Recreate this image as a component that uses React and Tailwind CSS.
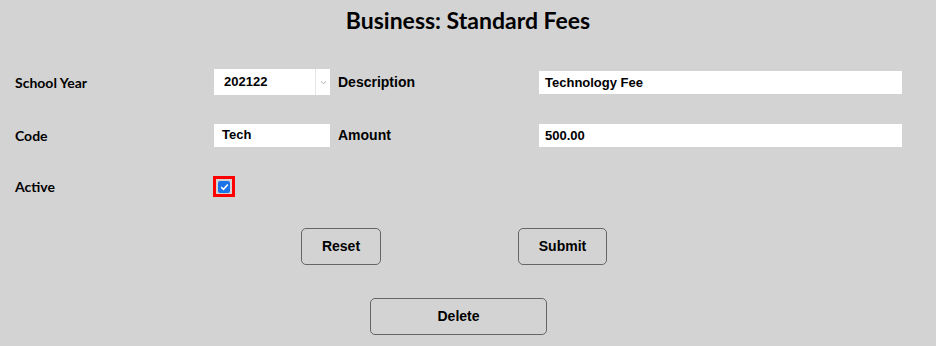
import React from "react";

const geo = { fontFamily: "Lato, 'Open Sans', sans-serif" };

const App = () => {
  return (
    <div className="w-[936px] h-[346px] bg-[#d3d3d3] text-black overflow-hidden" style={{ fontFamily: "'Liberation Sans', Arial, sans-serif" }}>
      {/* Title */}
      <h1 className="pt-[7px] text-center text-[23px] font-bold leading-[26px]" style={geo}>
        Business: Standard Fees
      </h1>

      {/* Form grid */}
      <div className="mt-[36px] pl-[15px] grid grid-cols-[199px_116px_209px_363px] items-center">
        {/* Row 1 */}
        <label className="text-[14px] font-bold" style={geo}>School Year</label>
        <div className="flex h-[26px] bg-white">
          <span className="flex-1 pl-[10px] text-[13px] font-bold leading-[26px]">202122</span>
          <span className="w-[15px] border-l border-[#e6e6e6] flex items-center justify-center">
            <svg width="7" height="5" viewBox="0 0 7 5">
              <path d="M1 1.5 L3.5 3.5 L6 1.5" fill="none" stroke="#b0b0b0" strokeWidth="1" />
            </svg>
          </span>
        </div>
        <label className="pl-[8px] text-[14px] font-bold">Description</label>
        <div className="h-[23px] bg-white pl-[6px] text-[13px] font-bold leading-[23px]">Technology Fee</div>

        {/* Row 2 */}
        <label className="mt-[29px] text-[14px] font-bold" style={geo}>Code</label>
        <div className="mt-[29px] h-[23px] bg-white pl-[8px] text-[13px] font-bold leading-[21px]">Tech</div>
        <label className="mt-[29px] pl-[8px] text-[14px] font-bold">Amount</label>
        <div className="mt-[29px] h-[23px] bg-white pl-[6px] text-[13px] font-bold leading-[23px]">500.00</div>

        {/* Row 3 */}
        <label className="mt-[29px] text-[14px] font-bold" style={geo}>Active</label>
        <div className="mt-[29px]">
          <div className="ml-[-1px] w-[22px] h-[21px] border-[3px] border-[#ff0000] flex items-center justify-center">
            <div className="w-[12px] h-[12px] rounded-[2px] bg-[#1a73e8] flex items-center justify-center">
              <svg width="9" height="8" viewBox="0 0 9 8">
                <path d="M1.2 4.2 L3.5 6.3 L7.8 1.5" fill="none" stroke="white" strokeWidth="1.6" />
              </svg>
            </div>
          </div>
        </div>
        <div />
        <div />
      </div>

      {/* Buttons */}
      <div className="mt-[31px] flex pl-[301px] gap-[137px]">
        <button className="w-[80px] h-[37px] rounded-[5px] border border-[#666] text-[14px] font-bold">Reset</button>
        <button className="w-[89px] h-[37px] rounded-[5px] border border-[#666] text-[14px] font-bold">Submit</button>
      </div>
      <div className="mt-[33px] pl-[370px]">
        <button className="w-[177px] h-[37px] rounded-[5px] border border-[#666] text-[14px] font-bold">Delete</button>
      </div>
    </div>
  );
};

export default App;
